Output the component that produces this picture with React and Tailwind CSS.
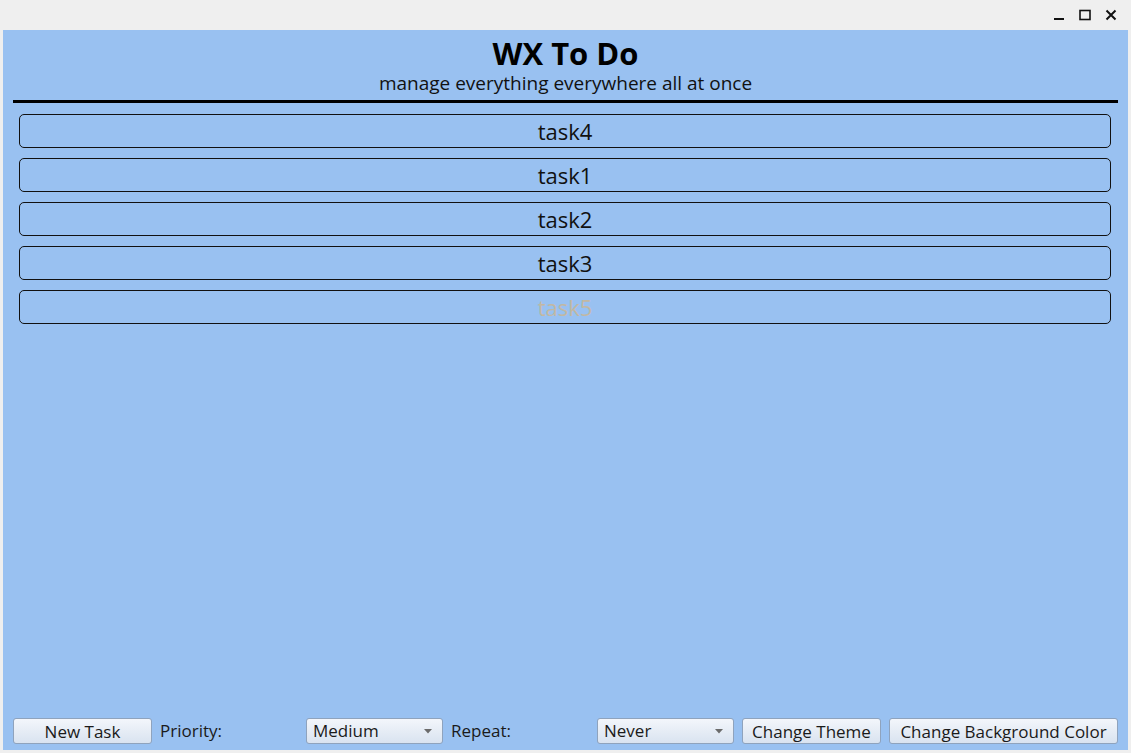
const tasks = [
  { name: "task4", done: false },
  { name: "task1", done: false },
  { name: "task2", done: false },
  { name: "task3", done: false },
  { name: "task5", done: true },
];

const font = { fontFamily: '"Open Sans", "Noto Sans", sans-serif' };

function Btn({ children, className = "" }) {
  return (
    <button
      className={
        "h-[26px] rounded-[3px] border border-[#8fa3bd] bg-gradient-to-b from-[#f3f6fb] to-[#d9e3f0] text-[17px] text-[#1a1a1a] leading-none whitespace-nowrap " +
        className
      }
    >
      {children}
    </button>
  );
}

function Combo({ value }) {
  return (
    <div className="flex h-[26px] w-[137px] items-center justify-between rounded-[3px] border border-[#8fa3bd] bg-gradient-to-b from-[#f3f6fb] to-[#d9e3f0] pl-[6px] pr-[10px] text-[17px] text-[#1a1a1a]">
      <span>{value}</span>
      <svg width="8" height="5" viewBox="0 0 8 5">
        <path d="M0 0h8L4 4.5z" fill="#6b6b6b" />
      </svg>
    </div>
  );
}

export default function App() {
  return (
    <div className="flex h-[753px] w-[1131px] flex-col bg-[#efefef]" style={font}>
      <div className="flex h-[30px] items-center justify-end gap-[14px] pr-[14px]">
        <svg width="12" height="12" viewBox="0 0 12 12">
          <rect x="1" y="9" width="10" height="2" fill="#111" />
        </svg>
        <svg width="12" height="12" viewBox="0 0 12 12">
          <rect x="1" y="1.5" width="10" height="9" fill="none" stroke="#111" strokeWidth="1.6" />
        </svg>
        <svg width="12" height="12" viewBox="0 0 12 12">
          <path d="M1.5 1.5l9 9M10.5 1.5l-9 9" stroke="#111" strokeWidth="2" />
        </svg>
      </div>
      <div className="mx-[3px] mb-[3px] flex flex-1 flex-col bg-[#99c1f1]">
        <div className="flex flex-col items-center pt-[4px]">
          <h1 className="text-[31px] font-bold leading-[38px] text-black">WX To Do</h1>
          <p className="text-[19px] leading-[23px] text-[#111]">
            manage everything everywhere all at once
          </p>
        </div>
        <div className="mx-[10px] mt-[5px] h-[3px] bg-black" />
        <div className="mt-[11px] flex flex-col gap-[10px] pl-[16px] pr-[17px]">
          {tasks.map(t => (
            <div
              key={t.name}
              className={
                "flex h-[34px] items-center justify-center rounded-[5px] border border-[#111] text-[22px] " +
                (t.done ? "text-[#c2b8a3]" : "text-[#111]")
              }
            >
              {t.name}
            </div>
          ))}
        </div>
        <div className="flex-1" />
        <div className="mb-[6px] flex items-center gap-[8px] px-[10px]">
          <Btn className="w-[139px]">New Task</Btn>
          <span className="w-[138px] text-[17px] text-[#1a1a1a]">Priority:</span>
          <Combo value="Medium" />
          <span className="w-[138px] text-[17px] text-[#1a1a1a]">Repeat:</span>
          <Combo value="Never" />
          <Btn className="w-[139px]">Change Theme</Btn>
          <Btn className="flex-1">Change Background Color</Btn>
        </div>
      </div>
    </div>
  );
}
